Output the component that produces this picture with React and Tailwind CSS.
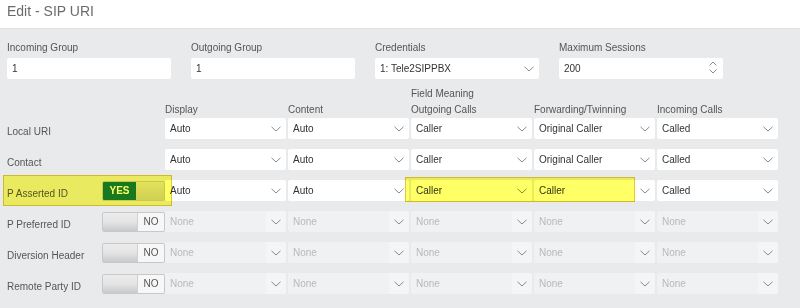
const font = { fontFamily: '"Liberation Sans", Arial, sans-serif' }

function Chevron({ className = '' }) {
  return (
    <svg width="10" height="6" viewBox="0 0 10 6" className={className}>
      <path d="M0.5 0.8 L5 5 L9.5 0.8" fill="none" stroke="#8a8a8a" strokeWidth="1" />
    </svg>
  )
}

function Select({ value, disabled }) {
  return (
    <div
      className={`relative flex h-[21px] items-center rounded-[2px] pl-[5px] text-[10px] ${
        disabled ? 'bg-[#f0f1f2] text-[#b9b9b9]' : 'bg-white text-[#333]'
      }`}
    >
      <span>{value}</span>
      <div
        className={`absolute right-0 top-0 flex h-full w-[20px] items-center justify-center rounded-r-[2px] ${
          disabled ? 'bg-[#f4f5f6]' : ''
        }`}
      >
        <Chevron />
      </div>
    </div>
  )
}

function Toggle({ on }) {
  if (on) {
    return (
      <div className="-mr-[2px] flex h-[20px] w-[63px] overflow-hidden rounded-[2px] border border-[#c8c8c8] bg-[#d9d9d9]">
        <div className="flex w-[33px] items-center justify-center bg-[#17784a] text-[10px] font-bold text-white">YES</div>
        <div className="flex-1 bg-gradient-to-b from-[#e2e2e2] to-[#cfcfcf]" />
      </div>
    )
  }
  return (
    <div className="-mr-[2px] flex h-[20px] w-[63px] overflow-hidden rounded-[2px] border border-[#c8c8c8]">
      <div className="w-[34px] bg-gradient-to-b from-[#ececec] via-[#e4e4e4] to-[#c9c9c9]" />
      <div className="flex flex-1 items-center justify-center border-l border-[#d0d0d0] bg-[#f7f7f7] text-[10px] text-[#555]">NO</div>
    </div>
  )
}

const rows = [
  { label: 'Local URI', values: ['Auto', 'Auto', 'Caller', 'Original Caller', 'Called'] },
  { label: 'Contact', values: ['Auto', 'Auto', 'Caller', 'Original Caller', 'Called'] },
  { label: 'P Asserted ID', toggle: 'yes', values: ['Auto', 'Auto', 'Caller', 'Caller', 'Called'] },
  { label: 'P Preferred ID', toggle: 'no', disabled: true, values: ['None', 'None', 'None', 'None', 'None'] },
  { label: 'Diversion Header', toggle: 'no', disabled: true, values: ['None', 'None', 'None', 'None', 'None'] },
  { label: 'Remote Party ID', toggle: 'no', disabled: true, values: ['None', 'None', 'None', 'None', 'None'] },
]

export default function App() {
  return (
    <div className="h-[308px] w-[800px] overflow-hidden bg-[#e9eaec]" style={font}>
      <div className="h-[29px] border-b border-[#dedfe1] bg-white pl-[7px] pt-[2px]">
        <h1 className="text-[14px] leading-[18px] text-[#6b6b6b]">Edit - SIP URI</h1>
      </div>

      <div className="relative px-[7px] pt-[13px]">
        <div className="grid grid-cols-[164px_164px_164px_164px] gap-x-[20px]">
          <div>
            <div className="mb-[4px] h-[12px] text-[10px] leading-[12px] text-[#555]">Incoming Group</div>
            <div className="flex h-[21px] items-center rounded-[2px] bg-white pl-[5px] text-[10px] text-[#333]">1</div>
          </div>
          <div>
            <div className="mb-[4px] h-[12px] text-[10px] leading-[12px] text-[#555]">Outgoing Group</div>
            <div className="flex h-[21px] items-center rounded-[2px] bg-white pl-[5px] text-[10px] text-[#333]">1</div>
          </div>
          <div>
            <div className="mb-[4px] h-[12px] text-[10px] leading-[12px] text-[#555]">Credentials</div>
            <Select value="1: Tele2SIPPBX" />
          </div>
          <div>
            <div className="mb-[4px] h-[12px] text-[10px] leading-[12px] text-[#555]">Maximum Sessions</div>
            <div className="relative flex h-[21px] items-center rounded-[2px] bg-white pl-[5px] text-[10px] text-[#333]">
              200
              <div className="absolute right-[6px] top-[3px] flex flex-col gap-[3px]">
                <svg width="8" height="5" viewBox="0 0 8 5">
                  <path d="M0.5 4.5 L4 1 L7.5 4.5" fill="none" stroke="#8a8a8a" strokeWidth="1" />
                </svg>
                <svg width="8" height="5" viewBox="0 0 8 5">
                  <path d="M0.5 0.5 L4 4 L7.5 0.5" fill="none" stroke="#8a8a8a" strokeWidth="1" />
                </svg>
              </div>
            </div>
          </div>
        </div>

        <div className="mt-[7px] grid grid-cols-[156px_121px_121px_121px_121px_121px] gap-x-[2px]">
          <div />
          <div className="flex h-[32px] items-end text-[10px] leading-[16px] text-[#555]">Display</div>
          <div className="flex h-[32px] items-end text-[10px] leading-[16px] text-[#555]">Content</div>
          <div className="flex h-[32px] flex-col justify-end text-[10px] leading-[16px] text-[#555]">
            <span>Field Meaning</span>
            <span>Outgoing Calls</span>
          </div>
          <div className="flex h-[32px] items-end text-[10px] leading-[16px] text-[#555]">Forwarding/Twinning</div>
          <div className="flex h-[32px] items-end text-[10px] leading-[16px] text-[#555]">Incoming Calls</div>
        </div>

        <div className="grid grid-cols-[156px_121px_121px_121px_121px_121px] gap-x-[2px] gap-y-[10px]">
          {rows.map((row) => (
            <div key={row.label} className="contents">
              <div className="flex h-[21px] items-center justify-between">
                <span className="mt-[5px] text-[10px] text-[#555]">{row.label}</span>
                {row.toggle && <Toggle on={row.toggle === 'yes'} />}
              </div>
              {row.values.map((v, i) => (
                <Select key={i} value={v} disabled={row.disabled} />
              ))}
            </div>
          ))}
        </div>

        <div className="pointer-events-none absolute left-[3px] top-[146px] h-[31px] w-[169px] border border-[#e3cc2a] bg-[#ffff66] mix-blend-multiply" />
        <div className="pointer-events-none absolute left-[405px] top-[148px] h-[25px] w-[230px] border border-[#e3cc2a] bg-[#ffff66] mix-blend-multiply" />
      </div>
    </div>
  )
}
